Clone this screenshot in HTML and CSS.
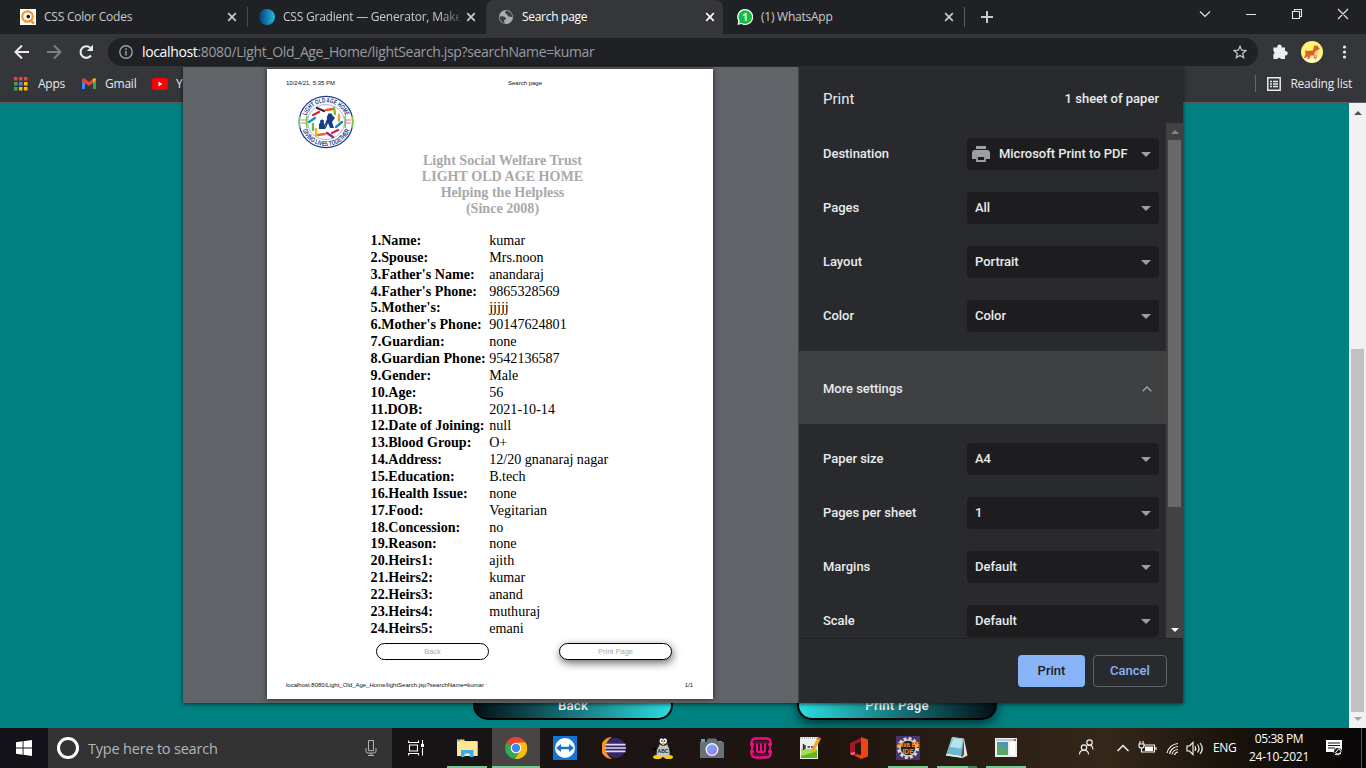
FILE: index.html
```html
<!DOCTYPE html>
<html lang="en">
<head>
<meta charset="utf-8">
<title>Search page</title>
<link rel="stylesheet" href="styles.css">
</head>
<body>
<svg class="defs" aria-hidden="true">
  <symbol id="x" viewBox="0 0 10 10"><path d="M1.2 1.2l7.6 7.6M8.8 1.2L1.2 8.8" fill="none" stroke="currentColor" stroke-width="1.7"/></symbol>
  <symbol id="down" viewBox="0 0 10 5"><path d="M0 0h10L5 5z" fill="currentColor"/></symbol>
</svg>
<div class="browser">
  <header class="tabs">
    <div class="tab">
      <svg class="fav" viewBox="0 0 16 16"><rect width="16" height="16" fill="#fff"/><circle cx="7.5" cy="7.5" r="5.2" fill="none" stroke="#f7931a" stroke-width="2.2"/><path d="M10 11l4 3.5" stroke="#f7931a" stroke-width="2.4"/><circle cx="8.3" cy="7.6" r="1.8" fill="#111"/></svg>
      <span class="name t1">CSS Color Codes</span><svg class="close"><use href="#x"/></svg>
    </div>
    <div class="tab ruled">
      <span class="fav blue"></span>
      <span class="name fade t2">CSS Gradient — Generator, Make</span><svg class="close"><use href="#x"/></svg>
    </div>
    <div class="tab active">
      <svg class="fav" viewBox="0 0 16 16"><circle cx="8" cy="8" r="7" fill="#a9adb3"/><path d="M1.500 7.500Q5 6.500 7.500 8.500q1.500 2-1 2.200-1 1.300.5 4Q2 13 1.500 7.500zM8.500 1.500Q6.500 3 7.500 4.500q2 .5 2 2 .5 1.500 3 1 1.200 1.200 2 .5Q14 3 8.500 1.500z" fill="#3b3e42"/></svg>
      <span class="name t3">Search page</span><svg class="close"><use href="#x"/></svg>
    </div>
    <div class="tab last">
      <svg class="fav wide" viewBox="0 0 16 16"><path d="M8 0a8 8 0 1 1-3.700 15L.500 16 1.200 12A8 8 0 0 1 8 0z" fill="#fff"/><path d="M8 1.200a6.800 6.800 0 1 1-3.200 12.700l-2.600.700.600-2.600A6.800 6.800 0 0 1 8 1.200z" fill="#0cc143"/><text x="8" y="11.800" text-anchor="middle" class="badge">1</text></svg>
      <span class="name t4">(1) WhatsApp</span><svg class="close"><use href="#x"/></svg>
    </div>
    <svg class="plus" viewBox="0 0 12 12"><path d="M6 0v12M0 6h12" stroke="#c8cacd" stroke-width="2"/></svg>
    <svg class="controls" viewBox="0 0 160 28"><path d="M10 11.500l5 5 5-5M56 14.500h10M102.500 11.500h7v7h-7zM104.500 11.500v-2h7v7h-2M148 9l10 10M158 9l-10 10" fill="none" stroke="#e4e5e7" stroke-width="1.100"/></svg>
  </header>

  <div class="toolbar">
    <svg class="nav" viewBox="0 0 108 28"><g fill="none" stroke-width="2"><path d="M29 14H16.500M22 7.500L15.500 14l6.500 6.500" stroke="#e8eaed"/><path d="M47 14h13M54 7.500L60.500 14 54 20.500" stroke="#7b7e82"/><path d="M91 17.500a5.800 5.800 0 1 1-.8-7.800" stroke="#e8eaed" stroke-width="2.100"/></g><path d="M93 6.800v6.200h-6.200z" fill="#e8eaed"/></svg>
    <div class="omnibox">
      <svg class="info" viewBox="0 0 14 14"><circle cx="7" cy="7" r="6.200" fill="none" stroke="#9aa0a6" stroke-width="1.400"/><path d="M7 6v4.500M7 3.300v1.600" stroke="#9aa0a6" stroke-width="1.500"/></svg>
      <span class="url"><b>localhost</b>:8080/Light_Old_Age_Home/lightSearch.jsp?searchName=kumar</span>
      <svg class="star" viewBox="0 0 14 14"><path d="M7 1.300l1.700 3.900 4.200.4-3.200 2.800 1 4.200L7 10.400l-3.700 2.200 1-4.200L1.100 5.600l4.200-.4z" fill="none" stroke="#bdc1c6" stroke-width="1.300"/></svg>
    </div>
    <svg class="ext" viewBox="0 0 108 28"><path d="M16 9.500h3.300a2.300 2.300 0 1 1 4.400 0H27V13a2.300 2.300 0 1 1 0 4.500v3.500h-4a1.900 1.900 0 0 0-3.600 0h-4v-4.500a2.100 2.100 0 0 0 0-3.600V9.500z" fill="#eceef1"/><circle cx="54" cy="14" r="11" fill="#fff475"/><path d="M44.500 19q9 3 19 0a11 11 0 0 1-19 0z" fill="#fff8d8"/><path d="M47 12l2 1 6-.5 1-4 1-1.500 1.500 1 1.500-.5.500 2L62 11l-3 1.500v5l-1 3.500h-1.500l-.5-3.500h-3.500L51 21h-1.500l.2-3-2.200 2H46l1.500-4z" fill="#dc5f26"/><path d="M58 12l-2 4 1 3.500h1l1.500-5z" fill="#eec39d"/><g fill="#e8eaed"><circle cx="86.500" cy="9" r="1.600"/><circle cx="86.500" cy="14" r="1.600"/><circle cx="86.500" cy="19" r="1.600"/></g></svg>
  </div>

  <div class="bookmarks">
    <svg class="apps" viewBox="0 0 14 14"><path d="M0 0h3.500v3.500H0zM5 0h3.500v3.500H5zM10 0h3.500v3.500H10z" fill="#ea4335"/><path d="M0 5h3.500v3.500H0z" fill="#34a853"/><path d="M5 5h3.500v3.500H5z" fill="#4285f4"/><path d="M10 5h3.500v3.500H10zM5 10h3.500v3.500H5zM10 10h3.500v3.500H10z" fill="#fbbc04"/><path d="M0 10h3.500v3.500H0z" fill="#34a853"/></svg>
    <span class="b1">Apps</span>
    <svg class="gm" viewBox="0 0 14 11"><path d="M0 1.500V11h3V4.500z" fill="#4285f4"/><path d="M14 1.500V11h-3V4.500z" fill="#34a853"/><path d="M0 2C0 0 1.600 0 3 .8l4 3.200 4-3.200V5L7 8 0 3z" fill="#ea4335"/><path d="M11 .8c1.500-1.200 3-.6 3 1.200L11 5z" fill="#fbbc04"/></svg>
    <span class="b2">Gmail</span>
    <svg class="yt" viewBox="0 0 16 12"><rect width="16" height="12" rx="3" fill="#f00"/><path d="M6.500 3.500v5L10.500 6z" fill="#fff"/></svg>
    <span>YouTube</span>
    <div class="reading"><svg viewBox="0 0 14 14"><path d="M.8.8h12.400v12.400H.8z" fill="none" stroke="#e8eaed" stroke-width="1.500"/><path d="M3 4.500h2M6 4.500h5M3 7h2M6 7h5M3 9.500h2M6 9.500h5" stroke="#e8eaed" stroke-width="1.400"/></svg><span>Reading list</span></div>
  </div>

  <main class="viewport">
    <div class="site"><button class="pill back">Back</button><button class="pill print">Print Page</button></div>
    <div class="scroll light"><svg><use href="#down"/></svg><i></i><svg><use href="#down"/></svg></div>
  </main>

  <footer class="taskbar">
    <div class="start"><svg viewBox="0 0 16 16"><path d="M0 2.300L6.600 1.300v6.300H0zM7.500 1.200L16 0v7.600H7.500zM0 8.500h6.600v6.300L0 13.800zM7.500 8.500H16V16l-8.500-1.200z" fill="#fff"/></svg></div>
    <div class="search"><i></i><span>Type here to search</span><svg viewBox="0 0 12 16"><path d="M3.500.5h5v10.200h-5zM1 8v3q0 2 2 2h6q2 0 2-2V8M6 13v2.500M3 15.500h6" fill="none" stroke="#b5b5b5"/></svg></div>
    <div class="view"><svg viewBox="0 0 16 16"><path d="M.5.500v2h10v-2M1.500 5h8v6h-8zM.5 15.500v-2h10v2M14.500 0v4M14.500 8v7.500" fill="none" stroke="#fff" stroke-width="1.100"/><path d="M13 4h3v3h-3z" fill="#fff"/></svg></div>
    <div class="app open"><svg viewBox="0 0 24 24"><path d="M2 3.500h7l1 1.500h12.500v15H2z" fill="#ffd95f"/><path d="M2 6h20.500v14H2z" fill="#ffe794"/><path d="M3 4h2v1H3z" fill="#32a5dd"/><path d="M6 21v-7h12.500v7H15v-3.500H9.500V21z" fill="#38aee8"/></svg></div>
    <div class="app open current"><svg viewBox="0 0 24 24"><path d="M12 12L2.500 6.500A11 11 0 0 1 21.500 6.500z" fill="#ea4335"/><path d="M12 12L2.500 6.500a11 11 0 0 0 8.500 16.400z" fill="#34a853"/><path d="M12 12h-1v10.900A11 11 0 0 0 21.500 6.500H12z" fill="#fbbc04"/><path d="M12 6.500h9.500L12 12l-6-3.500z" fill="#ea4335"/><path d="M7.500 14.500l4 8.500 5-8.500z" fill="#34a853"/><path d="M16.500 14.500L11.200 23h2C23 22 25 13 21.500 6.500H15z" fill="#fbbc04"/><circle cx="12" cy="12" r="5.300" fill="#fff"/><circle cx="12" cy="12" r="4.200" fill="#4285f4"/></svg></div>
    <div class="app"><svg viewBox="0 0 24 24"><path d="M0 0h24v24H0z" fill="#1674d1"/><circle cx="12" cy="12" r="10" fill="#fff"/><path d="M3 12l5-4v2.800h8V8l5 4-5 4v-2.800H8V16z" fill="#1674d1"/></svg></div>
    <div class="app"><svg viewBox="0 0 24 24"><path d="M10 1A11 11 0 0 0 10 23 13 13 0 0 1 10 1z" fill="#f7941e"/><circle cx="13.500" cy="12" r="10.200" fill="#342763"/><path d="M3.500 8.700h20M2.500 12h22M3.500 15.300h20" stroke="#ded8f3" stroke-width="1.700"/></svg></div>
    <div class="app"><svg viewBox="0 0 24 24"><path d="M5 10L1 14l5 2zM18 10l4 5-5 1z" fill="#080808"/><path d="M8 2q4-4 8 0l1 7q3 4 2 11l-7 2-7-2q-1-6 3-11z" fill="#c4c5c6" stroke="#111"/><path d="M8 2q4-4 8 0l.5 3-1 4-3.500 1-4-2z" fill="#141414"/><ellipse cx="10.500" cy="5" rx="2" ry="2.700" fill="#fff"/><ellipse cx="14" cy="5" rx="2" ry="2.700" fill="#fff"/><circle cx="11" cy="5" r=".8"/><circle cx="13.500" cy="5" r=".8"/><path d="M9.500 7h5.500l-3 2.500z" fill="#fc0"/><ellipse cx="6.500" cy="21" rx="4.500" ry="2" fill="#fdcc12"/><ellipse cx="17.500" cy="21" rx="4.500" ry="2" fill="#fdcc12"/><text x="12" y="16.500" text-anchor="middle" class="abc">ABC</text></svg></div>
    <div class="app"><svg viewBox="0 0 24 24"><path d="M1 3h4v3H1zM18 5h4v3h-4z" fill="#4aaedd"/><path d="M0 6h6l2-3.500h8L18 6h6v16H0z" fill="#687078"/><circle cx="12" cy="13.500" r="6.500" fill="#fff"/><circle cx="12" cy="13.500" r="5.200" fill="url(#lens)"/><defs><linearGradient id="lens" x2="1" y2="1"><stop stop-color="#51c7fa"/><stop offset="1" stop-color="#b768e5"/></linearGradient></defs></svg></div>
    <div class="app"><svg viewBox="0 0 24 24"><path d="M2.500 8.500V7q0-4.500 4.500-4.500h10q4.500 0 4.500 4.500v1.500M2.500 15.500V17q0 4.500 4.500 4.500h10q4.500 0 4.500-4.500v-1.500M1 8.500h4M19 8.500h4M1 15.500h4M19 15.500h4" fill="none" stroke="#f20b89" stroke-width="2.400"/><path d="M5 5h14v3H5zM5 17.500h14V20H5z" fill="#f20b89" opacity=".25"/><path d="M3 7v10M21 7v10" stroke="#f20b89" stroke-width="1.800"/><path d="M8 7.500v6.500q0 2 2 2h4q2 0 2-2V7.500M12 7.500V16" fill="none" stroke="#f20b89" stroke-width="2.200"/></svg></div>
    <div class="app"><svg viewBox="0 0 24 24"><path d="M2 1h18v22H2z" fill="#eee"/><path d="M3 14h16v8H3z" fill="#5cb91c"/><path d="M3 13h16l-2 3L3 20z" fill="#a5df50"/><path d="M2 2h18" stroke="#b7c2c7" stroke-width="2" stroke-dasharray="1 1"/><path d="M5.500 8v6M7 9v4M9.500 11h2.500M13 11h2.500" stroke="#333" stroke-width="1.400"/><path d="M20 1l3 1.500L16.500 15l-3.500 3 .5-4.500z" fill="#eaae27"/><path d="M20 1l3 1.500-1 2L19 3z" fill="#e8614d"/></svg></div>
    <div class="app"><svg viewBox="0 0 24 24"><path d="M3 7l11-5v4L8 8v9l6 1.500V22L3 18z" fill="#a51623"/><path d="M14 1l7 2.500v17L14 23l-8-4.500 8 1z" fill="#ed4414"/><path d="M3 17l5-1v1.500l-3 2z" fill="#f46b8e"/></svg></div>
    <div class="app open"><svg viewBox="0 0 24 24"><path d="M0 0h24v24H0z" fill="#48346e"/><circle cx="12" cy="12" r="9.500" fill="none" stroke="#dad6d4" stroke-width="3" stroke-dasharray="3 2"/><circle cx="12" cy="12" r="8" fill="#222" stroke="#d7d2ce" stroke-width="1.500"/><text x="12" y="11" text-anchor="middle" class="ide" textLength="23" lengthAdjust="spacingAndGlyphs">Java EE</text><text x="12" y="17.500" text-anchor="middle" class="ide">IDE</text></svg></div>
    <div class="app open note"><svg viewBox="0 0 24 24"><path d="M7 1l12 1.500 3.500 17-5 2.500L1 19.500z" fill="#e6e3d7"/><path d="M7.500 1.500l11.500 1.500-3 17L1.500 18z" fill="#68b8ce"/><path d="M8.500 2l9.500 1.500-2 9L5 11z" fill="#b4e3ea"/><path d="M19 3l-3 17 1 1.500 2-3z" fill="#45555c"/><path d="M1.500 18l14.500 2v1.500L1 19.500z" fill="#e4edef"/></svg></div>
    <div class="app open"><svg viewBox="0 0 24 24"><path d="M1 2h22v19H1z" fill="#eee"/><path d="M2 3h20v2H2z" fill="#b8cbd2"/><path d="M3 6h11v13H3z" fill="#4e95b2"/><path d="M3 8q8 2 11 9v2H3z" fill="#58a663"/><path d="M16 6h5v13h-5z" fill="#fff"/><path d="M20 3h2v2h-2z" fill="#d84f3d"/></svg></div>
    <div class="tray"><svg viewBox="0 0 130 24"><g fill="none" stroke="#f3f3f3" stroke-width="1.150"><circle cx="5" cy="11.500" r="2.700"/><path d="M.5 18.500q0-4.300 4.500-4.300t4.500 4.300"/><circle cx="10.500" cy="6.500" r="2.700"/><path d="M8.500 9.500q5-1.500 5.500 4"/><path d="M38.500 15l5.500-5.500 5.500 5.500" stroke-width="1.500"/><path d="M65 9h10.500v7H65M77 11v3M61 5v3M64 5v3M60 8h5v2q0 2-2.500 2T60 10zM62.500 12v4H66"/><path d="M88 17a12 12 0 0 1 11-9.500M90.500 18a9 9 0 0 1 8.500-7.500M93 18.500a6 6 0 0 1 6-5M95.500 19a4 4 0 0 1 3.500-3"/><path d="M108 10h2.500L114 6.500v12L110.500 15H108zM116 10q1.500 2.500 0 5M118.500 8.500q3 4 0 8M121 7q4.500 5.500 0 11"/></g><path d="M66 10.500h8v4.500h-8z" fill="#fff"/></svg></div>
    <span class="lang">ENG</span>
    <div class="clock"><span>05:38 PM</span><span class="date">24-10-2021</span></div>
    <svg class="action" viewBox="0 0 18 18"><path d="M1 1h16v11h-5v5l-4-4H1z" fill="#fff"/><path d="M3 4h12M3 6.500h12M3 9h7" stroke="#17120d"/><circle cx="13" cy="13" r="4" fill="#17120d"/><path d="M10.500 13.500l3.500-4 2 3-2.500 3.500zM10 15.500l6-1" fill="none" stroke="#fff"/></svg>
    <i class="desk"></i>
  </footer>

  <section class="dialog">
    <div class="preview">
      <article class="paper">
        <div class="meta top"><span>10/24/21, 5:35 PM</span><span>Search page</span></div>
        <svg class="logo" viewBox="0 0 56 54"><defs><path id="arcTop" d="M7.500 27a20.500 19.500 0 0 1 41 0"/><path id="arcBot" d="M3 27a25 24 0 0 0 50 0"/></defs>
          <ellipse cx="28" cy="27" rx="26.800" ry="25.600" fill="#fff" stroke="#203b86" stroke-width="1.300"/><ellipse cx="28" cy="27" rx="18.500" ry="17.500" fill="none" stroke="#8193bf" stroke-width=".7"/>
          <path d="M1.500 21v12M54.500 21v12M9 21q-1.500 6 0 12M47 21q1.500 6 0 12" fill="none" stroke="#7ac943" stroke-width="1.500"/><path d="M3 25h5M3 28h5M48 25h5M48 28h5" stroke="#f0a5a9" stroke-width="1.500"/>
          <text class="ring"><textPath href="#arcTop" startOffset="50%" text-anchor="middle" textLength="50" lengthAdjust="spacingAndGlyphs">LIGHT OLD AGE HOME</textPath></text><text class="ring"><textPath href="#arcBot" startOffset="50%" text-anchor="middle" textLength="60" lengthAdjust="spacingAndGlyphs">GIVING LIVES TOGETHER</textPath></text>
          <g fill="none" stroke-width="2.300" stroke-linecap="round"><path d="M19 13l7 3" stroke="#5d1828"/><path d="M28 15l7-1" stroke="#f35b23"/><path d="M36 13l1 6" stroke="#72bd35"/><path d="M41 20v6" stroke="#f3a31b"/><path d="M44 27l-6 5" stroke="#1984c4"/><path d="M40 35l-6 3" stroke="#dc2430"/><path d="M35 42l-6-4" stroke="#8c237e"/><path d="M27 39l-7 1" stroke="#f26624"/><path d="M18 41v-7" stroke="#f4af20"/><path d="M15 35v-6" stroke="#65b944"/><path d="M11 27l6-4" stroke="#158dc8"/><path d="M15 20l6-3" stroke="#d52b2c"/></g>
          <path d="M21 29l2-2 3 1 2 5-1 1h-6zM29 21l4-2 4 4-3 4 2 6h-4l-2-5-2 5-1-4 2-5z" fill="#143b87"/><circle cx="24" cy="26.500" r="2" fill="#143b87"/><circle cx="32" cy="20.500" r="2.300" fill="#143b87"/>
        </svg>
        <h1>Light Social Welfare Trust<br>LIGHT OLD AGE HOME<br>Helping the Helpless<br>(Since 2008)</h1>
        <dl>
          <dt>1.Name:</dt><dd>kumar</dd><dt>2.Spouse:</dt><dd>Mrs.noon</dd><dt>3.Father's Name:</dt><dd>anandaraj</dd><dt>4.Father's Phone:</dt><dd>9865328569</dd><dt>5.Mother's:</dt><dd>jjjjj</dd><dt>6.Mother's Phone:</dt><dd>90147624801</dd><dt>7.Guardian:</dt><dd>none</dd><dt>8.Guardian Phone:</dt><dd>9542136587</dd><dt>9.Gender:</dt><dd>Male</dd><dt>10.Age:</dt><dd>56</dd><dt>11.DOB:</dt><dd>2021-10-14</dd><dt>12.Date of Joining:</dt><dd>null</dd><dt>13.Blood Group:</dt><dd>O+</dd><dt>14.Address:</dt><dd>12/20 gnanaraj nagar</dd><dt>15.Education:</dt><dd>B.tech</dd><dt>16.Health Issue:</dt><dd>none</dd><dt>17.Food:</dt><dd>Vegitarian</dd><dt>18.Concession:</dt><dd>no</dd><dt>19.Reason:</dt><dd>none</dd><dt>20.Heirs1:</dt><dd>ajith</dd><dt>21.Heirs2:</dt><dd>kumar</dd><dt>22.Heirs3:</dt><dd>anand</dd><dt>23.Heirs4:</dt><dd>muthuraj</dd><dt>24.Heirs5:</dt><dd>emani</dd>
        </dl>
        <div class="actions"><span>Back</span><span class="raised">Print Page</span></div>
        <div class="meta foot"><span>localhost:8080/Light_Old_Age_Home/lightSearch.jsp?searchName=kumar</span><span>1/1</span></div>
      </article>
    </div>
    <aside class="settings">
      <div class="head"><span class="ttl">Print</span><span>1 sheet of paper</span></div>
      <div class="body">
        <div class="options">
          <div class="row"><span>Destination</span><div class="sel"><svg class="printer" viewBox="0 0 18 16"><path d="M4 0h10v3H4zM3 4h12q3 0 3 3v6h-4V9H4v4H0V7q0-3 3-3z" fill="#9aa0a6"/><path d="M5 10h8v5H5z" fill="none" stroke="#9aa0a6" stroke-width="1.800"/></svg><span class="grow">Microsoft Print to PDF</span><svg class="arr"><use href="#down"/></svg></div></div>
          <div class="row"><span>Pages</span><div class="sel"><span class="grow">All</span><svg class="arr"><use href="#down"/></svg></div></div>
          <div class="row"><span>Layout</span><div class="sel"><span class="grow">Portrait</span><svg class="arr"><use href="#down"/></svg></div></div>
          <div class="row"><span>Color</span><div class="sel"><span class="grow">Color</span><svg class="arr"><use href="#down"/></svg></div></div>
          <div class="more"><span>More settings</span><svg viewBox="0 0 10 6"><path d="M.7 5.300L5 1l4.300 4.300" fill="none" stroke="#a0a4a8" stroke-width="1.300"/></svg></div>
          <div class="row"><span>Paper size</span><div class="sel"><span class="grow">A4</span><svg class="arr"><use href="#down"/></svg></div></div>
          <div class="row"><span>Pages per sheet</span><div class="sel"><span class="grow">1</span><svg class="arr"><use href="#down"/></svg></div></div>
          <div class="row"><span>Margins</span><div class="sel"><span class="grow">Default</span><svg class="arr"><use href="#down"/></svg></div></div>
          <div class="row"><span>Scale</span><div class="sel"><span class="grow">Default</span><svg class="arr"><use href="#down"/></svg></div></div>
        </div>
        <div class="scroll dark"><svg><use href="#down"/></svg><i></i><svg><use href="#down"/></svg></div>
      </div>
      <div class="bottom"><button class="ok">Print</button><button class="cancel">Cancel</button></div>
    </aside>
  </section>
</div>
</body>
</html>
```
FILE: styles.css
```css
*{box-sizing:border-box}
body{margin:0;overflow:hidden;font:12px "Open Sans","Noto Sans",sans-serif;color:#e8eaed}
svg{display:block;flex:none}
button{font:inherit;margin:0;padding:0;flex:none}
.defs{display:none}
.browser{position:relative;width:1366px;height:768px;display:flex;flex-direction:column;background:#35363a}
.tabs{height:34px;flex:none;display:flex;align-items:center;background:#202124;padding-left:8px}
.tab{width:239px;height:34px;display:flex;align-items:center;gap:8px;padding-left:12px;color:#c9cccf}
.fav{width:16px;height:16px;flex:none}
.blue{border-radius:50%;background:linear-gradient(90deg,#073b78,#20bde0)}
.name{width:176px;white-space:nowrap;line-height:18px}
.t1{letter-spacing:-.22px}.t2{letter-spacing:-.22px}.t3{letter-spacing:-.29px}.t4{letter-spacing:-.24px}
.fade{-webkit-mask:linear-gradient(90deg,#000 156px,rgba(0,0,0,.2) 178px);mask:linear-gradient(90deg,#000 156px,rgba(0,0,0,.2) 178px)}
.close{width:10px;height:10px;margin-left:-1px}
.ruled{border-left:1px solid #4a4c50;height:20px;padding-left:11px}
.active{background:#35363a;border-radius:8px 8px 0 0;color:#fff;width:237px;margin-right:2px}
.last{width:240px;height:20px;border-right:1px solid #5b5d61}
.badge{font:bold 10px "Open Sans",sans-serif;fill:#fff}
.plus{width:12px;height:12px;margin-left:16px}
.controls{width:160px;height:28px;margin-left:auto;margin-right:16px;align-self:flex-start}
.toolbar{height:34px;flex:none;display:flex;align-items:center;padding-top:2px}
.nav{width:108px;height:28px}
.omnibox{width:1150px;height:28px;border-radius:14px;background:#202124;display:flex;align-items:center;padding:0 11px;gap:9px}
.info,.star{width:14px;height:14px}
.url{flex:1;font-size:14px;letter-spacing:-.355px;color:#989ca1;line-height:20px;white-space:nowrap}
.url b{font-weight:400;color:#fff}
.ext{width:108px;height:28px}
.bookmarks{height:35px;flex:none;display:flex;align-items:center;padding:0 14px 3px;border-bottom:1px solid #5a5c60;letter-spacing:-.22px;font-size:12px}
.apps{width:14px;height:14px}.b1{margin-left:10px;width:44px}
.gm{width:14px;height:11px}.b2{margin-left:9px;width:47px}
.yt{width:16px;height:12px;margin-right:8px}
.reading{margin-left:auto;display:flex;align-items:center;gap:9px;border-left:1px solid #66686c;height:17px;padding-left:11px}
.reading svg{width:14px;height:14px}
.viewport{flex:1;display:flex;background:teal}
.site{flex:1;display:flex;align-items:flex-end;padding:0 0 8px 473px;gap:124px}
.pill{width:200px;height:30px;border:2px solid #000;border-radius:16px;color:#f2f2f2;font:500 13.3px Roboto,Arial,sans-serif;letter-spacing:.15px}
.back{background:linear-gradient(90deg,#031018,#2bdce0)}
.print{background:linear-gradient(90deg,#2bdce0,#031018);box-shadow:0 4px 12px rgba(0,0,0,.6)}
.scroll{width:17px;flex:none;display:flex;flex-direction:column;align-items:center}
.scroll svg{width:8px;height:4px}
.scroll svg:first-child{transform:rotate(180deg)}
.light{background:#f1f1f1;padding:8px 0 7px;color:#505050}
.light i{width:13px;height:363px;background:#c1c1c1;margin:234px 0 auto}
.light svg:last-child{color:#a3a3a3}
.taskbar{height:40px;flex:none;display:flex;align-items:center;background:linear-gradient(90deg,#13121a 0,#171316 400px,#20160f 850px,#352719 1110px,#19130c 1230px,#070606 1366px)}
.start{width:48px;display:grid;place-items:center}.start svg{width:16px;height:16px}
.search{width:344px;height:40px;background:#333;display:flex;align-items:center;color:#b6b6b6;font-size:14.500px;letter-spacing:-.2px;padding:0 15px 0 9px}
.search i{width:22px;height:22px;border:3px solid #fff;border-radius:50%;margin-right:9px}
.search svg{width:12px;height:16px;margin-left:auto}
.view{width:51px;padding-left:16px}.view svg{width:16px;height:16px}
.app{width:48px;height:40px;margin-right:1px;display:grid;place-items:center;border-bottom:2px solid transparent;padding-top:2px;flex:none}
.app svg{width:24px;height:24px}
.open{background:linear-gradient(#76c893,#76c893) 4px 38px/40px 2px no-repeat}
.app.open{background-origin:border-box;background-clip:border-box}
.current{background:linear-gradient(#76c893,#76c893) 0 38px/48px 2px no-repeat,#494544}
.note{background-image:linear-gradient(90deg,#76c893 31px,#437e5a 31px)}
.abc{font:bold 5px "Liberation Sans",sans-serif;fill:#222}
.ide{font:bold 7px "Liberation Sans",sans-serif;fill:#ff8b18}
.tray{margin-left:48px}.tray svg{width:130px;height:24px}
.lang{margin-left:4px;font-size:12px;color:#fff;width:24px;letter-spacing:-.3px;padding-bottom:1px}
.clock{width:60px;margin-left:12px;display:flex;flex-direction:column;align-items:center;line-height:18px;color:#fff;white-space:nowrap;letter-spacing:-.4px}
.date{letter-spacing:-.25px}
.action{width:18px;height:18px;margin-left:16px}
.desk{width:1px;height:40px;background:#595550;margin-left:auto;margin-right:4px}
.dialog{position:absolute;left:183px;top:67px;width:1000px;height:636px;display:flex;background:#292a2d;box-shadow:0 1px 4px rgba(0,0,0,.65);font:500 13px Roboto,sans-serif}
.preview{width:616px;background:#606368;border-right:1px solid #424447;padding:2px 0 0 84px}
.paper{width:446px;height:630px;background:#fff;box-shadow:0 0 5px rgba(0,0,0,.65);color:#000;display:flex;flex-direction:column;font:14.100px "Liberation Serif",serif;padding-bottom:10px}
.meta{display:flex;font:6px/7px "Liberation Sans",Arial,sans-serif;color:#111;white-space:nowrap;padding:0 20px 0 19px;justify-content:space-between}
.top{padding-top:11px;justify-content:flex-start}
.top span:first-child{width:222px}
.logo{width:56px;height:54px;margin:8px 0 0 31px}
.ring{font:bold 6.800px "Liberation Sans",Arial,sans-serif;fill:#203b86}
h1{margin:3px 0 0;width:471px;text-align:center;color:#a9a9a9;font:bold 14.100px/16px "Liberation Serif",serif}
dl{margin:16px 0 0 103.600px;display:grid;grid-template-columns:118.600px 1fr;grid-auto-rows:16.870px;line-height:16.870px}
dt{font-weight:700;white-space:nowrap}dd{margin:0;white-space:nowrap}
.actions{display:flex;gap:70px;padding-left:109px;margin-top:6px;font:7.500px "Liberation Sans",Arial,sans-serif;color:#aaa}
.actions span{width:113px;height:17px;border:1.500px solid #000;border-radius:9px;display:grid;place-items:center;background:#fff}
.actions .raised{box-shadow:1px 3px 8px rgba(0,0,0,.6)}
.foot{margin-top:auto}
.settings{width:384px;display:flex;flex-direction:column}
.head{height:56px;display:flex;align-items:center;justify-content:space-between;padding:7px 24px 0;font-size:13px}
.ttl{font-size:15px;font-weight:400}
.body{height:515px;display:flex;overflow:hidden}
.options{width:367px;height:515px;overflow:hidden;padding-top:4px}
.row{height:54px;display:flex;align-items:center;justify-content:space-between;padding:0 7px 0 24px;letter-spacing:-.03px}
.row>span,.grow{padding-bottom:2px}
.sel{width:192px;height:32px;border-radius:4px;background:#1d1d1f;display:flex;align-items:center;padding:0 8px}
.grow{flex:1;white-space:nowrap}
.printer{width:18px;height:16px;margin:0 9px 0 -3px}
.arr{width:10px;height:5px;color:#9aa0a6}
.more{height:73px;margin:8px 0;background:#3f4042;display:flex;align-items:center;justify-content:space-between;padding:2px 14px 0 24px;letter-spacing:-.05px}
.more svg{width:10px;height:6px}
.dark{background:#424242;padding:7px 0 6px;color:#858585}
.dark i{width:13px;height:367px;background:#686868;margin:6px 0 auto}
.dark svg:last-child{color:#fff}
.bottom{height:65px;border-top:1px solid #202124;display:flex;justify-content:flex-end;align-items:center;gap:8px;padding-right:16px}
.ok,.cancel{height:32px;border-radius:4px;border:0;padding-bottom:1px}
.ok{width:67px;background:#8ab4f8;color:#202124}
.cancel{width:74px;background:transparent;border:1px solid #5f6368;color:#8ab4f8}
```
